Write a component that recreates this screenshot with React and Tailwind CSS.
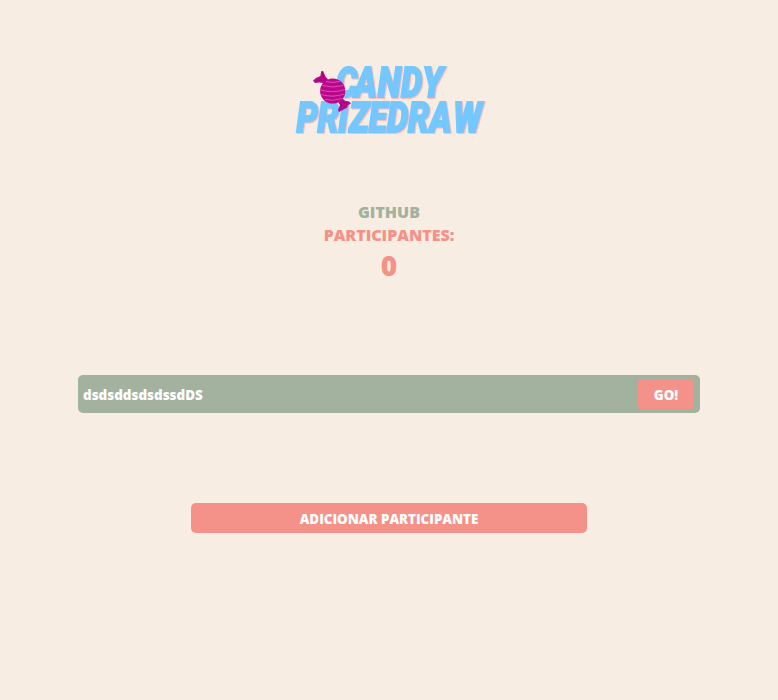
const SQUEEZE = 0.79;

// Each letter has its own start, measured along the squeezed baseline.
function Word({ starts, y, children }) {
  return (
    <text transform={`scale(${SQUEEZE} 1)`} x={starts.map((s) => s / SQUEEZE).join(' ')} y={y} fill="#74c7ff" stroke="#74c7ff" strokeWidth="1.8" strokeLinejoin="miter" className="font-['Roboto'] text-[43px] font-black italic">
      {children}
    </text>
  );
}

function Candy() {
  return (
    <g fill="#b9088c">
      <path d="M31 23 L27 23 L23 22.5 L19 23 L17 20.7 L20 18 L24.4 16 L25.2 11.3 L27 11 L28 13 L29.5 16.5 L32 19.5 Z" />
      <path d="M42.3 42.3 L44 45 L42 50 L43 52 L47.5 49.5 L51 47.7 L52 45.2 L55 43.3 L52.7 41.5 L49 40.7 L46.5 38.5 Z" />
      <circle cx="36.7" cy="31" r="12.6" />
      <g fill="none" stroke="#e04bb3" strokeWidth="1">
        <path d="M30 21.5 Q37 23.5 44 21.3" />
        <path d="M26 25.5 Q37 28.5 47.3 25.5" />
        <path d="M24.5 30 Q37 33.5 49 29.5" />
        <path d="M25 34.5 Q37 38 48.3 34" />
        <path d="M29 39.5 Q37 41.5 45.5 38.5" />
      </g>
      <path d="M26 14 L27.5 18 L29 20 M20 20.5 L25 20 L28 21 M45 42.5 L46 46 M46 42 L51 43.5" fill="none" stroke="#930873" strokeWidth="0.8" />
    </g>
  );
}

function Logo() {
  return (
    <svg className="block h-20 w-50 shrink-0 overflow-visible" viewBox="0 0 200 80" role="img" aria-label="Candy Prizedraw">
      <g className="drop-shadow-[1.5px_1px_0_#fcbcbc]">
        <Word starts={[39.7, 58.4, 81.8, 105, 126.2]} y={37}>CANDY</Word>
        <Word starts={[0.6, 21.5, 42.3, 53, 72.8, 91.1, 112, 133.3, 157.2]} y={72.3}>PRIZEDRAW</Word>
      </g>
      <Candy />
    </svg>
  );
}

export default function App() {
  return (
    <main className="flex h-[700px] w-full flex-col items-center bg-[#f7ede2] pt-[60px] font-['Open_Sans',sans-serif] font-extrabold text-[#f49188]">
      <div className="flex w-[186px] justify-start"><Logo /></div>
      <section className="mt-[61px] flex flex-col items-center text-base leading-[23px]">
        <h2 className="text-[#a3b19f]">GITHUB</h2>
        <h2>PARTICIPANTES:</h2>
        <p className="h-[38px] text-[28px] leading-9">0</p>
      </section>
      <form className="mt-[90px] flex h-[38px] w-[622px] items-center rounded-[5px] bg-[#a3b19f] pr-1.5 pl-[5px] text-white" onSubmit={(e) => e.preventDefault()}>
        <input className="min-w-0 flex-1 pt-[3px] text-[13.45px] outline-none" defaultValue="dsdsddsdsdssdDS" />
        <button className="h-[30px] w-14 rounded bg-[#f49188] pt-[3px] text-[13.333px]">GO!</button>
      </form>
      <button className="mt-[90px] h-[30px] w-[396px] rounded-[5px] bg-[#f49188] pt-[3px] text-[13.333px] text-white">ADICIONAR PARTICIPANTE</button>
    </main>
  );
}
